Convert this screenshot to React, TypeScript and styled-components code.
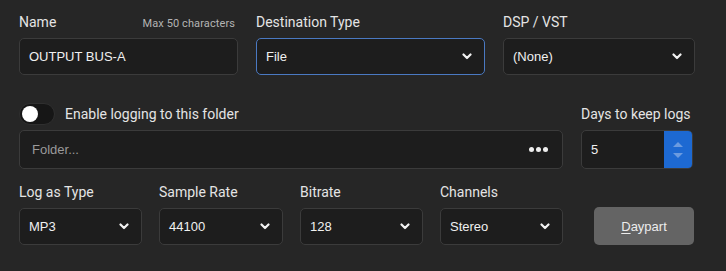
import { createGlobalStyle } from 'styled-components';
import styled from 'styled-components';

const GlobalStyle = createGlobalStyle`
	html, body {
		margin: 0;
		padding: 0;
		background: #262626;
	}
	body {
		font-family: Roboto, "Liberation Sans", Arial, sans-serif;
		color: #e2e2e2;
	}
`;

const Panel = styled.div`
	width: 726px;
	height: 271px;
	box-sizing: border-box;
	padding: 12px 32px 0 19px;
	background: #262626;
`;

const Row = styled.div<{ gap: number; top?: number }>`
	display: flex;
	gap: ${({ gap }) => `${gap}px`};
	margin-top: ${({ top }) => `${top ?? 0}px`};
	align-items: flex-end;
`;

const Field = styled.div<{ width: number }>`
	display: flex;
	flex-direction: column;
	width: ${({ width }) => `${width}px`};
	flex-shrink: 0;
`;

const LabelRow = styled.div`
	display: flex;
	justify-content: space-between;
	align-items: baseline;
	height: 20px;
	margin-bottom: 6px;
`;

const Label = styled.span`
	font-size: 14px;
	color: #e4e4e4;
	line-height: 20px;
`;

const Hint = styled.span`
	font-size: 11px;
	color: #b4b4b4;
	padding-right: 3px;
	letter-spacing: 0.1px;
`;

const Box = styled.div<{ focused?: boolean; height?: number; inset?: number }>`
	height: ${({ height }) => `${height ?? 37}px`};
	box-sizing: border-box;
	background: #1d1d1d;
	border: 1px solid ${({ focused }) => (focused ? '#4a79c2' : '#3b3b3b')};
	border-radius: 5px;
	display: flex;
	align-items: center;
	padding-left: ${({ inset }) => `${inset ?? 9}px`};
	font-size: 13px;
	color: #f0f0f0;
	overflow: hidden;
`;

const Value = styled.span<{ muted?: boolean }>`
	flex: 1;
	color: ${({ muted }) => (muted ? '#9a9a9a' : '#f0f0f0')};
	font-family: "Liberation Sans", Arial, sans-serif;
`;

const Chevron = styled.svg`
	width: 10px;
	height: 7px;
	margin-right: 12px;
`;

const Dots = styled.div`
	display: flex;
	gap: 2px;
	margin-right: 14px;

	span {
		width: 5px;
		height: 5px;
		border-radius: 50%;
		background: #eeeeee;
	}
`;

const ToggleRow = styled.div`
	display: flex;
	align-items: center;
	gap: 10px;
	height: 23px;
	margin-bottom: 5px;
`;

const Toggle = styled.div`
	width: 36px;
	height: 22px;
	box-sizing: border-box;
	border-radius: 11px;
	background: #161616;
	border: 1px solid #2f2f2f;
	display: flex;
	align-items: center;
	padding-left: 2px;

	&::after {
		content: '';
		width: 16px;
		height: 16px;
		border-radius: 50%;
		background: #ffffff;
	}
`;

const Spinner = styled.div`
	margin-left: auto;
	width: 28px;
	height: 100%;
	background: #1d69d2;
	display: flex;
	flex-direction: column;
	align-items: center;
	justify-content: center;
	gap: 6px;
`;

const Arrow = styled.div<{ up?: boolean }>`
	width: 0;
	height: 0;
	border-left: 5px solid transparent;
	border-right: 5px solid transparent;
	${({ up }) => (up ? 'border-bottom: 5px solid #6b9be0;' : 'border-top: 5px solid #6b9be0;')}
`;

const Button = styled.button`
	width: 100px;
	height: 38px;
	margin-left: 14px;
	border: none;
	border-radius: 5px;
	background: #646464;
	color: #ececec;
	font-family: "Liberation Sans", Arial, sans-serif;
	font-size: 13px;
	padding: 0;

	u {
		text-underline-offset: 2px;
	}
`;

function ChevronIcon() {
	return (
		<Chevron viewBox="0 0 10 7">
			<path d="M1.5 1.5 L5 5 L8.5 1.5" fill="none" stroke="#f2f2f2" strokeWidth="2.2" strokeLinecap="round" strokeLinejoin="round" />
		</Chevron>
	);
}

function Select({ label, value, width, focused }: { label: string; value: string; width: number; focused?: boolean }) {
	return (
		<Field width={ width }>
			<LabelRow>
				<Label>{ label }</Label>
			</LabelRow>
			<Box focused={ focused }>
				<Value>{ value }</Value>
				<ChevronIcon />
			</Box>
		</Field>
	);
}

export default function App() {
	return (
		<>
			<GlobalStyle />
			<Panel>
				<Row gap={ 18 }>
					<Field width={ 219 }>
						<LabelRow>
							<Label>Name</Label>
							<Hint>Max 50 characters</Hint>
						</LabelRow>
						<Box>
							<Value>OUTPUT BUS-A</Value>
						</Box>
					</Field>
					<Select label="Destination Type" value="File" width={ 229 } focused />
					<Select label="DSP / VST" value="(None)" width={ 192 } />
				</Row>

				<Row gap={ 18 } top={ 27 }>
					<Field width={ 544 }>
						<ToggleRow>
							<Toggle />
							<Label>Enable logging to this folder</Label>
						</ToggleRow>
						<Box height={ 39 } inset={ 12 }>
							<Value muted>Folder...</Value>
							<Dots><span /><span /><span /></Dots>
						</Box>
					</Field>
					<Field width={ 112 }>
						<LabelRow>
							<Label>Days to keep logs</Label>
						</LabelRow>
						<Box height={ 39 }>
							<Value>5</Value>
							<Spinner>
								<Arrow up />
								<Arrow />
							</Spinner>
						</Box>
					</Field>
				</Row>

				<Row gap={ 17 } top={ 13 }>
					<Select label="Log as Type" value="MP3" width={ 123 } />
					<Select label="Sample Rate" value="44100" width={ 124 } />
					<Select label="Bitrate" value="128" width={ 123 } />
					<Select label="Channels" value="Stereo" width={ 123 } />
					<Button><u>D</u>aypart</Button>
				</Row>
			</Panel>
		</>
	);
}
